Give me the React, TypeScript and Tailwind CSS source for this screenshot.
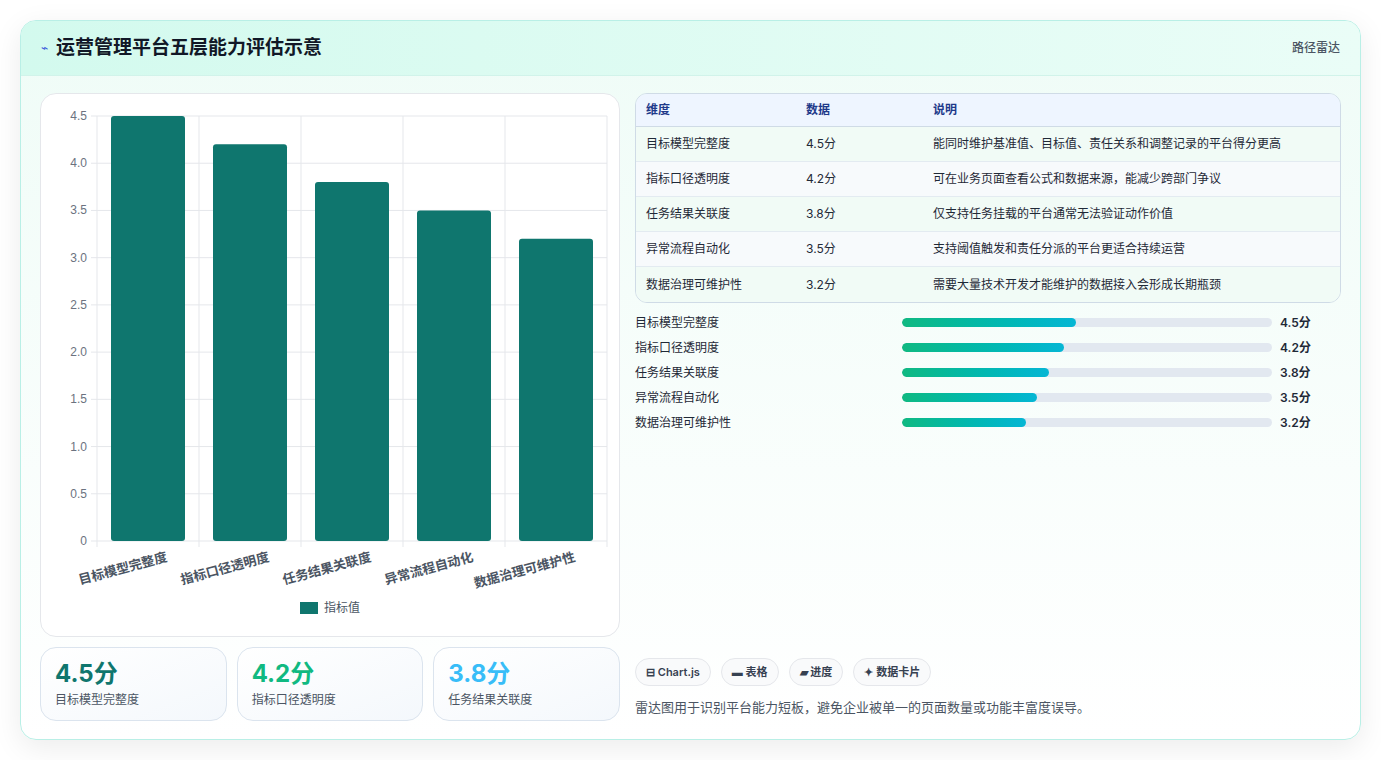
import React from "react";

const dims = [
  ["目标模型完整度", 4.5, "能同时维护基准值、目标值、责任关系和调整记录的平台得分更高"],
  ["指标口径透明度", 4.2, "可在业务页面查看公式和数据来源，能减少跨部门争议"],
  ["任务结果关联度", 3.8, "仅支持任务挂载的平台通常无法验证动作价值"],
  ["异常流程自动化", 3.5, "支持阈值触发和责任分派的平台更适合持续运营"],
  ["数据治理可维护性", 3.2, "需要大量技术开发才能维护的数据接入会形成长期瓶颈"],
] as const;

function Chart() {
  const x0 = 56, x1 = 566, yTop = 22, yBot = 447;
  const sy = (v: number) => yBot - (v / 4.5) * (yBot - yTop);
  const bw = (x1 - x0) / 5;
  return (
    <svg width="578" height="543" className="block">
      {Array.from({ length: 10 }, (_, i) => i * 0.5).map((v) => (
        <g key={v}>
          <line x1={x0 - 6} x2={x1} y1={sy(v)} y2={sy(v)} stroke="#e5e7eb" />
          <text x={x0 - 10} y={sy(v) + 4} textAnchor="end" fontSize="12" fill="#6b7280" fontFamily="Liberation Sans, sans-serif">
            {v === 0 ? "0" : v.toFixed(1)}
          </text>
        </g>
      ))}
      {Array.from({ length: 6 }, (_, i) => (
        <line key={i} x1={x0 + i * bw} x2={x0 + i * bw} y1={yTop} y2={yBot + 6} stroke="#e5e7eb" />
      ))}
      {dims.map(([n, v], i) => (
        <g key={n}>
          <rect x={x0 + i * bw + 14} y={sy(v)} width={bw - 28} height={yBot - sy(v)} rx="3" fill="#0f766e" />
          <text
            transform={`translate(${x0 + i * bw + bw / 2 + 20},${yBot + 20}) rotate(-15)`}
            textAnchor="end" fontSize="13" fontWeight="600" fill="#4b5563"
            fontFamily="Noto Sans CJK SC, sans-serif"
          >{n}</text>
        </g>
      ))}
      <rect x="259" y="508" width="18" height="12" fill="#0f766e" />
      <text x="283" y="518" fontSize="12" fill="#4b5563" fontFamily="Noto Sans CJK SC, sans-serif">指标值</text>
    </svg>
  );
}

export default function App() {
  return (
    <div className="w-[1381px] h-[760px] bg-white p-[20px] pb-[20px]" style={{ fontFamily: "Inter, 'Noto Sans CJK SC', sans-serif" }}>
      <div className="h-[720px] rounded-2xl border border-[#b9efe6] overflow-hidden shadow-[0_8px_30px_rgba(0,0,0,0.08)] bg-gradient-to-b from-[#effcf7] to-white flex flex-col">
        <div className="h-[55px] shrink-0 bg-gradient-to-r from-[#d3faee] to-[#eafdf7] border-b border-[#d1f3ea] flex items-center justify-between px-[20px]">
          <div className="flex items-center gap-2">
            <span className="text-[#3b5bdb] text-xs">⌁</span>
            <span className="text-[19px] font-bold text-[#111827]">运营管理平台五层能力评估示意</span>
          </div>
          <span className="text-xs text-[#4b5563] font-medium">路径雷达</span>
        </div>
        <div className="flex gap-[15px] px-[19px] pt-[17px]">
          <div className="w-[580px] flex flex-col gap-[10px]">
            <div className="h-[544px] rounded-2xl border border-[#e5e7eb] bg-white overflow-hidden">
              <Chart />
            </div>
            <div className="flex gap-[10px]">
              {[["4.5分", "text-[#0f766e]"], ["4.2分", "text-[#10b981]"], ["3.8分", "text-[#38bdf8]"]].map(([v, c], i) => (
                <div key={v} className="flex-1 h-[74px] rounded-2xl border border-[#dbe4ee] bg-gradient-to-br from-white to-[#f4f8fc] px-[14px] pt-[10px]">
                  <div className={`text-[24px] font-bold leading-[32px] ${c}`}>{v}</div>
                  <div className="text-xs text-[#4b5563] mt-[2px]">{dims[i][0]}</div>
                </div>
              ))}
            </div>
          </div>
          <div className="flex-1 flex flex-col">
            <div className="rounded-xl border border-[#cfdbe6] overflow-hidden text-xs">
              <div className="flex h-[33px] items-center bg-[#eef5ff] border-b border-[#cfdbe6] font-semibold text-[#1e3a8a]">
                <div className="w-[170px] pl-[10px]">维度</div>
                <div className="w-[127px]">数据</div>
                <div>说明</div>
              </div>
              {dims.map(([n, v, d], i) => (
                <div key={n} className={`flex h-[35px] items-center text-[#1f2937] ${i < 4 ? "border-b border-[#e3ebf1]" : ""} ${i % 2 ? "bg-[#f7fafc]" : "bg-[#f1fbf6]"}`}>
                  <div className="w-[170px] pl-[10px]">{n}</div>
                  <div className="w-[127px]">{v}分</div>
                  <div>{d}</div>
                </div>
              ))}
            </div>
            <div className="flex flex-col gap-[10px] mt-[12px]">
              {dims.map(([n, v]) => (
                <div key={n} className="flex items-center h-[15px] text-xs text-[#1f2937]">
                  <div className="w-[267px]">{n}</div>
                  <div className="w-[370px] h-[9px] rounded-full bg-[#e2e8f0] overflow-hidden">
                    <div className="h-full rounded-full bg-gradient-to-r from-[#10b981] to-[#06b6d4]" style={{ width: (v / 9.57) * 370 }} />
                  </div>
                  <div className="ml-[8px] font-semibold">{v}分</div>
                </div>
              ))}
            </div>
            <div className="mt-[228px] flex gap-[10px]">
              {["⊟ Chart.js", "▬ 表格", "▰ 进度", "✦ 数据卡片"].map((t) => (
                <span key={t} className="h-[28px] px-[10px] rounded-full border border-[#e5e7eb] bg-[#f9fafb] text-[11px] font-semibold text-[#374151] flex items-center">{t}</span>
              ))}
            </div>
            <div className="mt-[12px] text-[13px] text-[#4b5563]">雷达图用于识别平台能力短板，避免企业被单一的页面数量或功能丰富度误导。</div>
          </div>
        </div>
      </div>
    </div>
  );
}
